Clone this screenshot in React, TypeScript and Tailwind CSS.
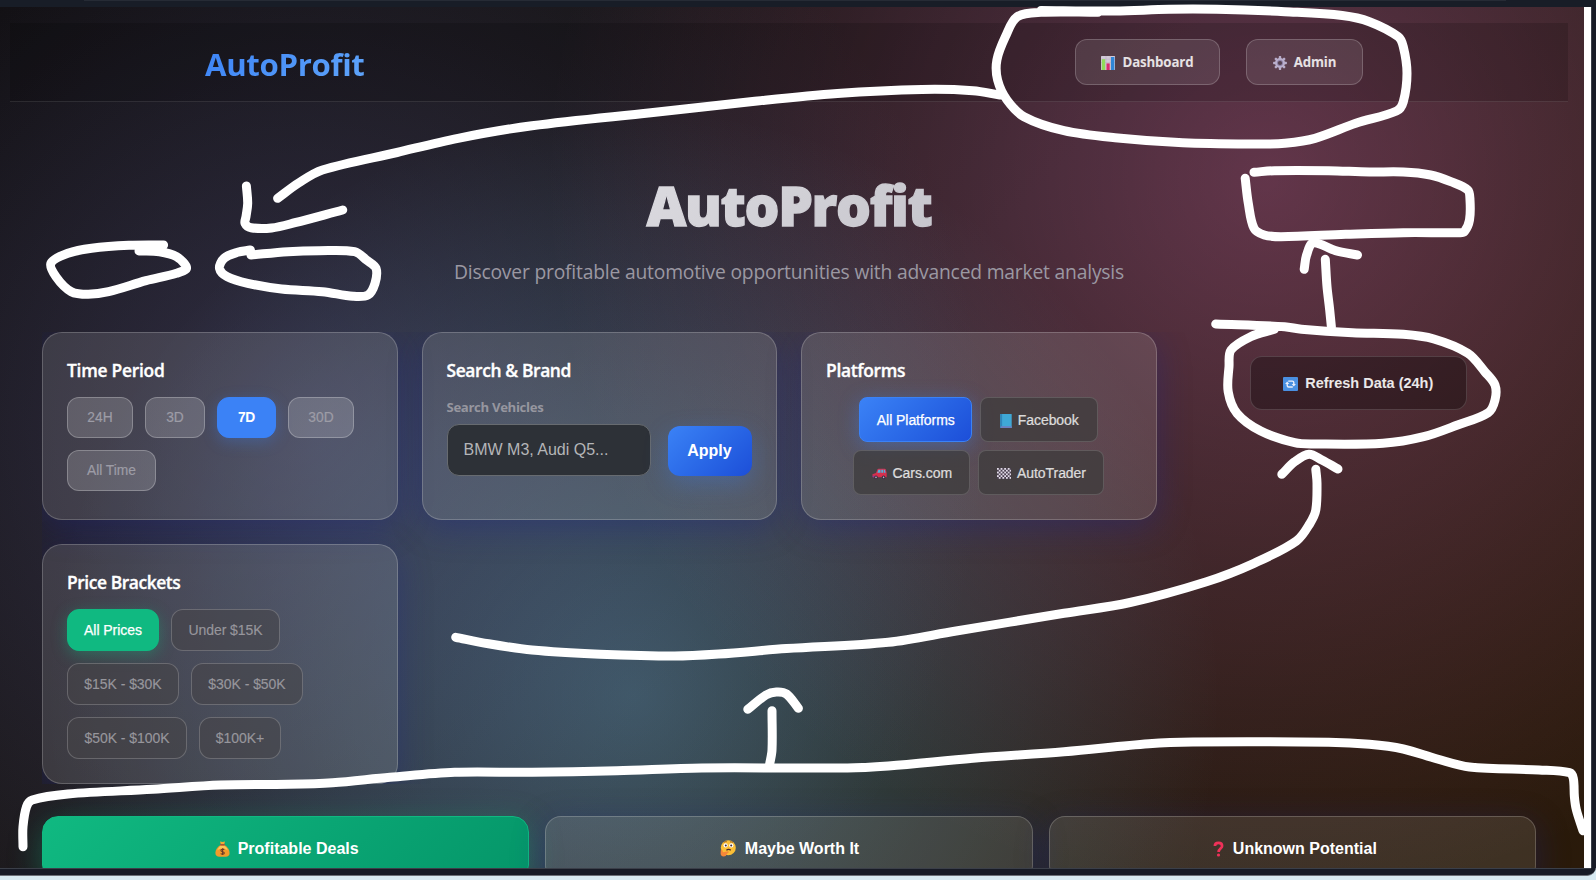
import type { ReactNode } from "react";
import clsx from "clsx";

const UI = "font-['Open_Sans','Noto_Sans',sans-serif]";
const ARIAL = "font-['Liberation_Sans',Arial,sans-serif]";

/* ---------- icons ---------- */

function ChartIcon() {
  return (
    <svg width="14" height="14" viewBox="0 0 14 14" className="shrink-0">
      <rect width="14" height="14" rx="0.5" fill="#d3c9d8" />
      <path d="M0 3.2h14M0 6.5h14M5 0v14M9.3 0v14" stroke="#b9aec2" strokeWidth="0.5" />
      <rect x="0.8" y="3.2" width="3.4" height="10.8" fill="#8fdc5a" />
      <rect x="5.5" y="7.4" width="3.2" height="6.6" fill="#d92c6e" />
      <rect x="10" y="1" width="3.4" height="13" fill="#2f86d8" />
    </svg>
  );
}

function GearIcon() {
  return (
    <svg width="14" height="14" viewBox="0 0 14 14" className="shrink-0">
      <g fill="#b9aecb">
        {[0, 45, 90, 135].map((a) => (
          <rect key={a} x="5.8" y="0.1" width="2.4" height="13.8" rx="0.6" transform={`rotate(${a} 7 7)`} />
        ))}
        <circle cx="7" cy="7" r="5" />
      </g>
      <circle cx="7" cy="7" r="3" fill="#8d7fa6" />
      <circle cx="7" cy="7" r="2.1" fill="#54404f" />
    </svg>
  );
}

function BookIcon() {
  return (
    <svg width="12" height="14" viewBox="0 0 12 14" className="shrink-0">
      <rect x="0.3" y="0" width="11.4" height="14" rx="0.6" fill="#3fa8d6" />
      <rect x="0.3" y="0" width="1.8" height="14" fill="#2f86bb" />
      <rect x="0.8" y="12.2" width="10.9" height="1.8" fill="#6c7fc0" />
    </svg>
  );
}

function CarIcon() {
  return (
    <svg width="15" height="13" viewBox="0 0 15 13" className="shrink-0">
      <path d="M0.4 7.2 4 6l1.4-3.6Q5.7 1.700 6.5 1.700h6.200q1 0 1.200.9l.8 4v3.600H.8z" fill="#d5304f" />
      <path d="M5.3 5.8 6.400 2.700h2.100v3.100zM9.300 2.700h2v3.100h-2zM12 2.700h.9l.7 3.100H12z" fill="#4fb3dc" />
      <path d="M.5 8.700h2.200v1.600H.8z" fill="#8d3b9c" />
      <circle cx="4" cy="10.400" r="1.800" fill="#3a2d42" />
      <circle cx="11.600" cy="10.400" r="1.800" fill="#3a2d42" />
      <circle cx="4" cy="10.400" r="0.800" fill="#b9aec2" />
      <circle cx="11.600" cy="10.400" r="0.800" fill="#b9aec2" />
    </svg>
  );
}

function CheckerIcon() {
  const cells: ReactNode[] = [];
  for (let r = 0; r < 6; r++)
    for (let c = 0; c < 8; c++)
      if ((r + c) % 2 === 0)
        cells.push(<rect key={`${r}-${c}`} x={c * 1.8} y={r * 1.8} width="1.8" height="1.8" fill="#e2dbe8" />);
  return (
    <svg width="14.4" height="10.8" viewBox="0 0 14.4 10.8" className="shrink-0">
      <rect width="14.4" height="10.8" fill="#4b4150" />
      {cells}
    </svg>
  );
}

function RefreshIcon() {
  return (
    <svg width="15" height="14" viewBox="0 0 15 14" className="shrink-0">
      <rect width="15" height="14" rx="1" fill="#4a90e2" />
      <g fill="none" stroke="#e9eefb" strokeWidth="1.4">
        <path d="M5.200 4.100H9.300Q10.800 4.100 10.800 5.600V7.600" />
        <path d="M9.800 10H5.700Q4.200 10 4.200 8.500V6.500" />
      </g>
      <path d="M8.700 7h4.200l-2.100 2.500zM2.100 7.100h4.200L4.200 4.600z" fill="#e9eefb" />
    </svg>
  );
}

function MoneyBagIcon() {
  return (
    <svg width="17" height="16" viewBox="-2 0 17 16" className="shrink-0">
      <path d="M5 .4 7.5 1.1 10 .4 9.2 3.2H5.8z" fill="#f5a932" />
      <path d="M5.4 4h4.2C13 6 14.600 9 14.600 12c0 2.600-1.600 3.800-4 3.800H4.400C2 15.800.4 14.600.4 12 .4 9 2 6 5.400 4z" fill="#f29b2b" />
      <path d="M5.400 5h4C11.800 6.400 12.600 8 12.800 9.600 10 6.800 5 7 2.400 9.400 2.800 7.600 4 6 5.400 5z" fill="#fbc65a" />
      <rect x="5" y="2.900" width="5" height="1.500" rx="0.700" fill="#a8543a" />
      <path d="M9.300 8.700C8.600 7.900 5.900 7.900 5.900 9.400c0 1.700 3.400.9 3.400 2.600 0 1.500-2.800 1.500-3.600.5M7.600 7.300v6.600" fill="none" stroke="#6b3a28" strokeWidth="1.100" />
    </svg>
  );
}

function ThinkingIcon() {
  return (
    <svg width="18" height="17" viewBox="-1 0 18 17" className="shrink-0">
      <circle cx="8.300" cy="7.800" r="7.500" fill="#fbbf36" />
      <circle cx="5.600" cy="5.400" r="2.100" fill="#fff" />
      <circle cx="11.300" cy="5.400" r="2.100" fill="#fff" />
      <circle cx="5.800" cy="5.400" r="1" fill="#3b2a3f" />
      <circle cx="11.200" cy="5.400" r="1" fill="#3b2a3f" />
      <path d="M3.800 2.300q1.500-1 3-.6M10 1.900q1.500-.3 2.800.6" stroke="#8a4a20" strokeWidth="0.800" fill="none" />
      <path d="M6.400 10.300q2-1.600 4.400-.2" stroke="#4d2a2a" strokeWidth="1.300" fill="none" />
      <path d="M.8 10.300q1-1.300 1.700.5l.5 1.500 5-1q1.200 0 .6 1.200L6.800 14q-.6 2.500-3 2.500Q.4 16.400.6 13z" fill="#f5873a" />
    </svg>
  );
}

function QuestionIcon() {
  return (
    <svg width="17" height="16" viewBox="-5 0 17 16" className="shrink-0">
      <path d="M1.900 4.900C1.900.800 9.100.800 9.100 4.900 9.100 7.600 5.600 7.400 5.600 11" fill="none" stroke="#ef3159" strokeWidth="2.700" />
      <circle cx="5.500" cy="14" r="1.600" fill="#ef3159" />
    </svg>
  );
}

/* ---------- building blocks ---------- */

function Card({ title, titleSpacing, children }: { title: string; titleSpacing: string; children: ReactNode }) {
  return (
    <section className="rounded-[20px] border border-white/20 bg-white/[0.12] p-6 shadow-[0_8px_32px_rgba(31,38,135,0.37)]">
      <h3
        className={clsx(
          UI,
          "mb-[14px] h-[26px] text-[17.4px] leading-[26px] font-semibold whitespace-nowrap text-white [-webkit-text-stroke:0.35px_white]",
          titleSpacing,
        )}
      >
        {title}
      </h3>
      {children}
    </section>
  );
}

const periods = [
  { label: "24H", width: "w-[66px]" },
  { label: "3D", width: "w-[60px]" },
  { label: "7D", width: "w-[59px]", active: true },
  { label: "30D", width: "w-[66px]" },
  { label: "All Time", width: "w-[89px]" },
];

const prices = [
  { label: "All Prices", width: "w-[92px]", active: true },
  { label: "Under $15K", width: "w-[109px]" },
  { label: "$15K - $30K", width: "w-[112px]" },
  { label: "$30K - $50K", width: "w-[112px]" },
  { label: "$50K - $100K", width: "w-[120px]" },
  { label: "$100K+", width: "w-[82px]" },
];

const platforms = [
  { label: "All Platforms", width: "w-[113px]", active: true, icon: null },
  { label: "Facebook", width: "w-[118px]", icon: <BookIcon /> },
  { label: "Cars.com", width: "w-[117px]", icon: <CarIcon /> },
  { label: "AutoTrader", width: "w-[126px]", icon: <CheckerIcon /> },
];

const tabs = [
  { label: "Profitable Deals", icon: <MoneyBagIcon />, active: true },
  { label: "Maybe Worth It", icon: <ThinkingIcon /> },
  { label: "Unknown Potential", icon: <QuestionIcon /> },
];

/* ---------- pen strokes ---------- */

const strokes: number[][] = [
  [277.6, 198.3, 298.6, 183, 322.4, 170, 397, 152.500, 458, 138.3, 532, 125.7, 650.8, 112.7, 752.6, 101.5, 837.4, 93.5, 922, 89.5, 973, 90.7, 1000, 95],
  [246.4, 186, 247.7, 203.3, 246, 216.7, 245, 223.3, 251, 227.7, 271.5, 228, 295, 222.7, 342.7, 210],
  [163.6, 245, 129, 245.3, 91.6, 248.3, 67.9, 253.3, 51, 263, 56, 276.7, 71.3, 291.7, 88.2, 294.3, 108.6, 291.7, 146, 280.7, 176.5, 273.3, 186.6, 268, 176.5, 256.7, 159.5, 251.7, 139, 251],
  [250.4, 250, 237.5, 252.3, 224, 258.3, 219.5, 268.3, 227.3, 276.7, 247.7, 283.3, 281.6, 289, 322.4, 291.7, 353, 296.3, 368, 295, 375, 283.3, 376, 268.3, 366.5, 260, 354.6, 251.7, 319, 250.7, 288, 251.7, 251, 255],
  [1098, 12.3, 1041, 12.3, 1017.2, 16.7, 1005.4, 36.7, 996.9, 60, 997.6, 80, 1007, 100, 1024, 116.7, 1064, 130.7, 1115, 137.7, 1182.8, 142.7, 1260.8, 144, 1284.6, 143.3, 1315, 138.3, 1355.8, 123.3, 1396.5, 111, 1403.3, 101.7, 1407, 73.3, 1403.3, 46.7, 1398.2, 36.7, 1369.4, 21.7, 1342.3, 15.5, 1284.6, 11.7, 1216.7, 9.3, 1169.2, 9.3, 1115, 11, 1041, 10.5],
  [1254, 172.3, 1274.4, 170.7, 1328.7, 170.7, 1369.4, 172, 1403.3, 172, 1430.5, 175, 1450.8, 181.7, 1467.8, 190, 1470, 200, 1469.5, 220, 1464.4, 231.7, 1459, 232.7, 1403.3, 232.7, 1345.6, 234.3, 1281, 236.7, 1264.2, 235, 1254, 228.3, 1248.3, 203.3, 1245.2, 178.3],
  [1304.2, 269.3, 1306.6, 255, 1313.4, 242.7, 1335.5, 250.7, 1357.5, 255],
  [1325.3, 259.3, 1327, 286.7, 1329.7, 310, 1331.4, 327],
  [1215.7, 324, 1284.6, 326.7, 1301.5, 329.3, 1352.4, 332.7, 1403.3, 334.3, 1433.9, 339, 1467.8, 353.3, 1484.8, 371.7, 1495, 385, 1495, 400, 1488.2, 412.7, 1457.6, 425, 1423.7, 436.7, 1383, 443.3, 1315, 444, 1294.7, 442.7, 1260.8, 431, 1237, 413.3, 1228.2, 391.7, 1229, 366.7, 1231, 350, 1250.6, 336.7, 1274.4, 329.3],
  [1281.8, 474.3, 1294.7, 461.7, 1309, 454.3, 1321.9, 460, 1338, 469],
  [1315.8, 469.3, 1317, 483.3, 1315.8, 510, 1310, 523.3, 1296.4, 541, 1254, 563.3, 1206.5, 581.7, 1130, 602.5, 1064, 613.3, 956.2, 631, 888.3, 642.3, 786.5, 648.6, 718.6, 654, 674.5, 656, 599.9, 654.2, 532, 650, 488.6, 643.8, 455.7, 637.3],
  [747.8, 709.3, 766, 695, 776.3, 692, 786.5, 694, 798.4, 708.3],
  [772, 710.7, 772, 750, 769.5, 765],
  [23, 846.7, 23, 826.7, 26.5, 806.7, 32.2, 800, 67.9, 794, 152.7, 789.3, 220.6, 785, 288.4, 784.3, 332.5, 782.7, 390, 777.3, 454.7, 772.3, 532, 772.3, 616.8, 770.7, 701.7, 768, 847.6, 768, 888.3, 766, 973, 758.3, 1064, 751.7, 1148.8, 743.7, 1193, 742, 1328.7, 742.3, 1369.4, 744.3, 1403.3, 749, 1437.3, 759, 1469.5, 767, 1539, 770, 1569.6, 772.7, 1573.3, 778.3, 1574.4, 796.7, 1576.4, 810, 1583, 830.7],
];

/** Smooth curve through a flat list of x,y pairs; tangents are weighted by the lengths of the neighbouring spans. */
function smoothPath(p: number[]): string {
  const n = p.length / 2;
  const at = (i: number) => {
    const k = Math.max(0, Math.min(n - 1, i));
    return [p[k * 2], p[k * 2 + 1]];
  };
  const dist = (a: number[], b: number[]) => Math.hypot(a[0] - b[0], a[1] - b[1]) || 0.001;
  let d = `M${p[0]} ${p[1]}`;
  for (let i = 0; i < n - 1; i++) {
    const p0 = at(i - 1);
    const p1 = at(i);
    const p2 = at(i + 1);
    const p3 = at(i + 2);
    const len = dist(p1, p2);
    const w1 = len / (3 * (dist(p0, p1) + len));
    const w2 = len / (3 * (dist(p2, p3) + len));
    const c1 = [p1[0] + (p2[0] - p0[0]) * w1, p1[1] + (p2[1] - p0[1]) * w1];
    const c2 = [p2[0] - (p3[0] - p1[0]) * w2, p2[1] - (p3[1] - p1[1]) * w2];
    d += `C${c1[0].toFixed(1)} ${c1[1].toFixed(1)} ${c2[0].toFixed(1)} ${c2[1].toFixed(1)} ${p2[0]} ${p2[1]}`;
  }
  return d;
}

function PenLayer() {
  return (
    <svg
      width="1596"
      height="880"
      viewBox="0 0 1596 880"
      className="pointer-events-none absolute top-0 left-0"
      fill="none"
      stroke="#fff"
      strokeWidth="9"
      strokeLinecap="round"
      strokeLinejoin="round"
    >
      {strokes.map((s, i) => (
        <path key={i} d={smoothPath(s)} />
      ))}
    </svg>
  );
}

/* ---------- page ---------- */

function Header() {
  return (
    <header className="mx-[10px] mr-4 flex h-[79px] items-center justify-between border-b border-white/10 bg-black/15 pr-[205px] pl-[195px]">
      <div className={clsx(UI, "bg-linear-135 from-[#3b82f6] to-[#60a5fa] bg-clip-text pt-[3px] text-[31.2px] leading-[44px] font-bold tracking-[-0.35px] text-transparent")}>
        AutoProfit
      </div>
      <nav className={clsx(UI, "flex gap-[26px] text-[13.3px] font-bold tracking-[-0.15px] text-white/85")}>
        <a className="flex h-[46px] w-[145px] items-center justify-center gap-[7px] rounded-xl border border-white/20 bg-white/10 pt-[2px]">
          <ChartIcon />
          Dashboard
        </a>
        <a className="flex h-[46px] w-[117px] items-center justify-center gap-[7px] rounded-xl border border-white/20 bg-white/10 pt-[2px]">
          <GearIcon />
          Admin
        </a>
      </nav>
    </header>
  );
}

export default function App() {
  return (
    <div className="relative h-[880px] w-[1596px] overflow-hidden bg-[#d8eaf2]">
      <div className="flex h-[876px] flex-col overflow-hidden rounded-br-[9px] border-b border-[#6d7078] bg-[#181b26]">
        <div className="flex h-[7px] shrink-0 bg-[#181d27] pl-[84px]">
          <div className="h-px w-[1422px] bg-[#262b35]" />
        </div>

        <div className="flex h-[861px] shrink-0">
          <main className="h-[861px] w-[1584px] overflow-hidden bg-[radial-gradient(circle_at_20%_50%,rgba(120,119,198,0.3)_0%,transparent_50%),radial-gradient(circle_at_80%_20%,rgba(255,119,198,0.3)_0%,transparent_50%),radial-gradient(circle_at_40%_80%,rgba(120,219,255,0.3)_0%,transparent_50%),linear-gradient(135deg,#0c0a09_0%,#1c1917_50%,#2a1a0a_100%)] pt-4">
            <Header />

            <div className="flex flex-col items-center pt-[65px] pr-[6px]">
              <h1 className={clsx(UI, "bg-linear-135 from-[#dcdbe0] to-[#c6c5cc] bg-clip-text px-2 text-[55px] leading-[76px] font-extrabold tracking-[-1.35px] text-transparent [-webkit-text-stroke:1.3px_transparent]")}>
                AutoProfit
              </h1>
              <p className={clsx(UI, "mt-[14px] text-[19.3px] leading-[30px] tracking-[-0.2px] whitespace-nowrap text-[#9b98a2]")}>
                Discover profitable automotive opportunities with advanced market analysis
              </p>
            </div>

            <div className="mt-[45px] ml-[42px] grid w-[1494px] grid-cols-4 grid-rows-[188px_240px] gap-6 overflow-hidden">
              <Card title="Time Period" titleSpacing="tracking-[-0.25px]">
                <div className="flex flex-wrap gap-3">
                  {periods.map((p) => (
                    <button
                      key={p.label}
                      className={clsx(
                        ARIAL,
                        "h-[41px] rounded-xl border pt-px text-[13.8px]",
                        p.width,
                        p.active
                          ? "border-[#3b82f6] bg-[#3b82f6] font-bold tracking-[-0.4px] text-white shadow-[0_4px_15px_rgba(59,130,246,0.3)]"
                          : "border-white/25 bg-white/[0.17] text-[#9d9ca6] [-webkit-text-stroke:0.2px]",
                      )}
                    >
                      {p.label}
                    </button>
                  ))}
                </div>
              </Card>

              <Card title="Search & Brand" titleSpacing="tracking-[-0.37px]">
                <div className="flex items-end gap-[17px]">
                  <div className="flex w-[204px] flex-col">
                    <label className={clsx(UI, "h-[27px] text-[13.2px] leading-[20px] font-bold tracking-[-0.35px] text-[#96969f]")}>
                      Search Vehicles
                    </label>
                    <input
                      placeholder="BMW M3, Audi Q5..."
                      className={clsx(ARIAL, "h-[52px] w-full rounded-xl border border-[#676b70] bg-[#2d3137] px-4 text-base placeholder:text-[#b4b5b8]")}
                    />
                  </div>
                  <button
                    className={clsx(ARIAL, "h-[50px] w-[84px] rounded-xl bg-linear-135 from-[#3b82f6] to-[#1d4ed8] text-base font-bold text-white shadow-[0_8px_25px_rgba(59,130,246,0.3)]")}
                  >
                    Apply
                  </button>
                </div>
              </Card>

              <Card title="Platforms" titleSpacing="tracking-[-0.3px]">
                <div className="flex flex-wrap justify-center gap-2">
                  {platforms.map((p) => (
                    <button
                      key={p.label}
                      className={clsx(
                        ARIAL,
                        "flex h-[45px] items-center justify-center gap-[6px] rounded-lg border pt-[2px] text-[14px] tracking-[-0.05px]",
                        p.width,
                        p.active
                          ? "border-[#3b82f6] bg-linear-135 from-[#3b82f6] to-[#1d4ed8] text-white shadow-[0_4px_20px_rgba(59,130,246,0.4)] [-webkit-text-stroke:0.25px]"
                          : "border-white/15 bg-[#3c3a3b]/70 text-white/80 [-webkit-text-stroke:0.15px]",
                      )}
                    >
                      {p.icon}
                      {p.label}
                    </button>
                  ))}
                </div>
              </Card>

              <div className="flex items-start justify-center pt-6">
                <button
                  className={clsx(ARIAL, "flex h-[54px] w-[217px] items-center justify-center gap-[7px] rounded-xl border border-white/15 bg-black/30 pt-[2px] text-[14.5px] font-bold text-white/90")}
                >
                  <RefreshIcon />
                  Refresh Data (24h)
                </button>
              </div>

              <Card title="Price Brackets" titleSpacing="tracking-[-0.42px]">
                <div className="flex flex-wrap gap-3">
                  {prices.map((p) => (
                    <button
                      key={p.label}
                      className={clsx(
                        ARIAL,
                        "h-[42px] rounded-xl border pt-px text-[14px] tracking-[-0.05px]",
                        p.width,
                        p.active
                          ? "border-[#10b981] bg-[#10b981] text-white shadow-[0_4px_15px_rgba(16,185,129,0.35)] [-webkit-text-stroke:0.25px]"
                          : "border-white/20 bg-[#454347]/55 text-[#97969c] [-webkit-text-stroke:0.15px]",
                      )}
                    >
                      {p.label}
                    </button>
                  ))}
                </div>
              </Card>
            </div>

            <div className="mt-8 ml-[42px] grid w-[1494px] grid-cols-3 gap-4">
              {tabs.map((t) => (
                <button
                  key={t.label}
                  className={clsx(
                    ARIAL,
                    "flex h-[65px] items-center justify-center gap-2 rounded-2xl border text-base font-bold text-white",
                    t.active
                      ? "border-[#10b981] bg-linear-135 from-[#10b981] to-[#059669] shadow-[0_8px_32px_rgba(16,185,129,0.37)]"
                      : "border-white/20 bg-white/10 shadow-[0_8px_32px_rgba(31,38,135,0.37)]",
                  )}
                >
                  {t.icon}
                  {t.label}
                </button>
              ))}
            </div>
          </main>
          <div className="w-[7px] bg-white" />
          <div className="flex-1 border-l border-[#3b3f49] bg-[#181b26]" />
        </div>
        <div className="h-[7px] w-[1591px] border-t border-[#3b3f49]" />
      </div>
      <PenLayer />
    </div>
  );
}
